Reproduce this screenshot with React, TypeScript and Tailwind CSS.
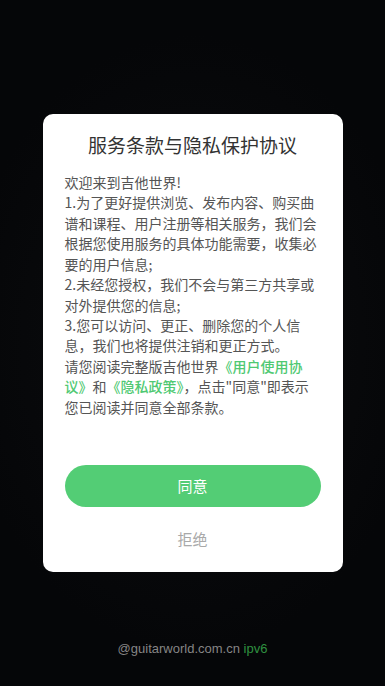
import React from "react";

export default function App() {
  const font = { fontFamily: '"Noto Sans CJK SC", "Noto Sans", sans-serif' };
  return (
    <div
      className="h-[686px] w-full flex flex-col items-center bg-[#050608] bg-[radial-gradient(ellipse_60%_45%_at_50%_50%,#101114_0%,#08090b_60%,#050608_100%)]"
      style={font}
    >
      <div className="flex-1 basis-0" />
      <div className="w-[300px] rounded-[10px] bg-white px-[22px] pt-[17px] pb-[22px] flex flex-col">
        <h1 className="text-center text-[19px] leading-[28px] text-[#333333] font-normal">
          服务条款与隐私保护协议
        </h1>
        <div className="mt-[13px] text-[14px] leading-[20.4px] text-[#555555]">
          <p>欢迎来到吉他世界!</p>
          <p>1.为了更好提供浏览、发布内容、购买曲谱和课程、用户注册等相关服务，我们会根据您使用服务的具体功能需要，收集必要的用户信息;</p>
          <p>2.未经您授权，我们不会与第三方共享或对外提供您的信息;</p>
          <p>3.您可以访问、更正、删除您的个人信息，我们也将提供注销和更正方式。</p>
          <p>
            请您阅读完整版吉他世界
            <span className="text-[#4fc972] font-medium">《用户使用协议》</span>和
            <span className="text-[#4fc972] font-medium">《隐私政策》</span>，点击"同意"即表示您已阅读并同意全部条款。
          </p>
        </div>
        <button className="mt-[48px] h-[42px] w-full rounded-full bg-[#53cd75] text-white text-[15px]">
          同意
        </button>
        <div className="mt-[21px] text-center text-[15px] leading-[22px] text-[#a9a9a9]">拒绝</div>
      </div>
      <div className="flex-1 basis-0 w-full flex flex-col justify-end items-center">
        <div
          className="mb-[28px] text-[13px] leading-[18px] text-[#858585]"
          style={{ fontFamily: '"Liberation Sans", "Noto Sans", sans-serif' }}
        >
          @guitarworld.com.cn <span className="text-[#2f9140]">ipv6</span>
        </div>
      </div>
    </div>
  );
}
